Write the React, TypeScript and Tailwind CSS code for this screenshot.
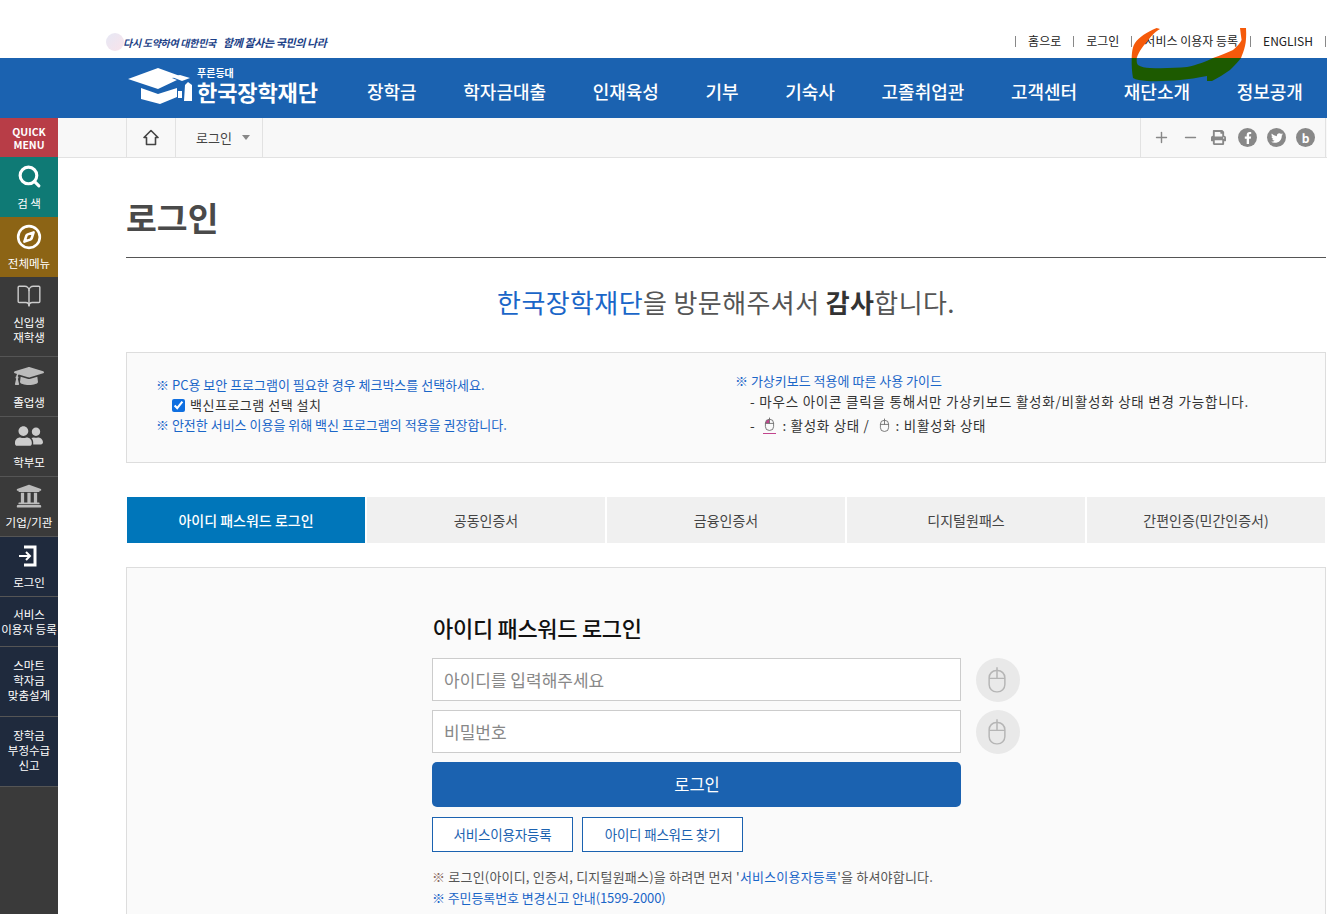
import { BookOpen, Compass, Plus, Minus, Search } from "lucide-react";
import { FaFacebookF, FaGraduationCap, FaPrint, FaTwitter, FaUniversity, FaUserFriends } from "react-icons/fa";

const font = "font-['Noto_Sans_CJK_KR','Noto_Sans',sans-serif]";

const topLinks = ["홈으로", "로그인", "서비스 이용자 등록", "ENGLISH"];

const navItems = ["장학금", "학자금대출", "인재육성", "기부", "기숙사", "고졸취업관", "고객센터", "재단소개", "정보공개"];

const tabs = ["아이디 패스워드 로그인", "공동인증서", "금융인증서", "디지털원패스", "간편인증(민간인증서)"];

const MouseIcon = ({ active = false, className = "" }: { active?: boolean; className?: string }) => (
  <svg viewBox="0 0 16 24" fill="none" className={className}>
    {active && <path d="M1.5 10.5 V9 a6 6 0 0 1 6 -4.5 V10.5z" fill="#c2448d" />}
    <rect x="1" y="4" width="14" height="19" rx="6.5" stroke="currentColor" strokeWidth="1.3" />
    <path d="M1 11h14M8 4v7M8 4V1" stroke="currentColor" strokeWidth="1.3" />
  </svg>
);

const LoginIcon = () => (
  <svg width="22" height="22" viewBox="0 0 22 22" fill="none" stroke="#fff">
    <path d="M6 2h11v18H6" strokeWidth="3" />
    <path d="M1 11h10M8 7l4 4-4 4" strokeWidth="2" />
  </svg>
);

const SideItem = ({ icon, lines, className }: { icon?: React.ReactNode; lines: string[]; className: string }) => (
  <div className={`flex flex-col items-center justify-center border-b border-[#555] text-center text-[11.5px] leading-[15px] text-white ${className}`}>
    {icon && <div className="mb-[6px] flex h-[26px] items-center justify-center">{icon}</div>}
    {lines.map((l) => (
      <div key={l} className="whitespace-nowrap">{l}</div>
    ))}
  </div>
);

const Sidebar = () => (
  <aside className="flex w-[58px] shrink-0 flex-col bg-[#3a3a3a]">
    <div className="flex h-[39px] items-center justify-center bg-[#b83d47] text-center text-[10.5px] font-bold leading-[13px] text-white">
      QUICK
      <br />
      MENU
    </div>
    <SideItem className="h-[60px] border-b-0 bg-[#0f7a75]" lines={["검 색"]} icon={<Search size={25} strokeWidth={3} color="#fff" />} />
    <SideItem className="h-[60px] border-b-0 bg-[#8c6415]" lines={["전체메뉴"]} icon={<Compass size={26} strokeWidth={2.4} color="#fff" />} />
    <SideItem className="h-[80px] pb-[5px]" lines={["신입생", "재학생"]} icon={<BookOpen size={26} strokeWidth={1.3} color="#ccc" />} />
    <SideItem className="h-[60px]" lines={["졸업생"]} icon={<FaGraduationCap size={30} color="#bbb" />} />
    <SideItem className="h-[60px]" lines={["학부모"]} icon={<FaUserFriends size={28} color="#ccc" />} />
    <SideItem className="h-[60px]" lines={["기업/기관"]} icon={<FaUniversity size={26} color="#bbb" />} />
    <SideItem className="h-[60px] bg-[#1f2a3d]" lines={["로그인"]} icon={<LoginIcon />} />
    <SideItem className="h-[50px] bg-[#1f2a3d]" lines={["서비스", "이용자 등록"]} />
    <SideItem className="h-[70px] bg-[#1f2a3d] pb-[3px]" lines={["스마트", "학자금", "맞춤설계"]} />
    <SideItem className="h-[70px] bg-[#1f2a3d] pb-[3px]" lines={["장학금", "부정수급", "신고"]} />
  </aside>
);

const Header = () => (
  <>
    <div className="relative flex h-[58px] items-end justify-between bg-white pl-[106px]">
      <div className="mb-[7px] flex items-center">
        <div className="h-[18px] w-[18px] rounded-full bg-gradient-to-br from-[#e6e8f5] to-[#f9e3ea]" />
        <span className="-ml-px whitespace-nowrap text-[10px] font-bold italic tracking-[-0.3px] text-[#1c3f87]">
          다시 도약하여 대한민국
        </span>
        <span className="ml-[7px] whitespace-nowrap text-[11px] font-bold italic tracking-[-0.4px] text-[#1c3f87]">
          함께 잘사는 국민의 나라
        </span>
      </div>
      <div className="mb-[8px] flex items-center text-[12px] text-[#222]">
        {topLinks.map((t) => (
          <span key={t} className="flex items-center">
            <span className="h-[11px] w-px bg-[#888]" />
            <span className="whitespace-nowrap px-[12px]">{t}</span>
          </span>
        ))}
        <span className="h-[11px] w-px bg-[#888]" />
        <span className="w-px" />
      </div>
      <svg className="absolute left-[1131px] top-[28px]" width="116" height="54" viewBox="0 0 116 54">
        <path d="M0.7 30 C1 22 2 18 4 15 C8 9 16 4 25.6 0 L29 1 C22 5 20 9 17.3 12 C13 17 8 23 5.7 30z" fill="#f55a0a" />
        <path d="M109 0 L115 0 C115.5 8 115 14 114 18 C113 23 111 27 110 30 L82 30 C90 27 96 25 102 22 C106 19 109 15 110.6 12 C110 8 109.5 4 109 0z" fill="#f55a0a" />
        <path d="M0.7 30 L5.7 30 C5.5 34 6 36 7 37 C10 39 14 40 19 40 C32 40.5 46 40 56 39 C66 37 76 33 82 30 L110 30 C107 34 103 38 99 42 C93 46 87 50 81 53 L76 53 L76 48 C66 50 58 51 49 52 C38 53 26 53.5 16 53 C10 52.5 5 52 2 50 C1 44 0.5 38 0.7 30z" fill="#1d5a00" />
      </svg>
    </div>
    <div className="flex h-[60px] items-center bg-[#1b62b0] pl-[127px] text-white">
      <div className="-mt-[6px] flex w-[240px] shrink-0 items-center">
        <svg width="66" height="40" viewBox="0 0 66 40" fill="#fff">
          <path d="M1 14 L31 3 L53 11 L45 13 L50 15 L31 24z" />
          <path d="M45 12 L53 10 L63 13 L55 16z" />
          <path d="M14 23 L31 29 L50 23 V32 L33 39 L14 34z" />
          <rect x="51" y="26" width="4" height="7" />
          <path d="M58 20 L61 17 L65 20 V36 H57z" />
        </svg>
        <div className="ml-[4px] flex flex-col">
          <span className="text-[10px] font-bold leading-[13px]">푸른등대</span>
          <span className="whitespace-nowrap text-[22px] font-bold leading-[25px] tracking-[-0.1px]">한국장학재단</span>
        </div>
      </div>
      <nav className="mt-[6px] flex gap-[46.6px] text-[18px] font-medium">
        {navItems.map((n) => (
          <span key={n} className="whitespace-nowrap">{n}</span>
        ))}
      </nav>
    </div>
  </>
);

const Breadcrumb = () => (
  <div className="flex h-[40px] items-stretch justify-between border-b border-[#e2e2e2] bg-[#f8f8f8] pl-[68px] text-[#555]">
    <div className="flex">
      <div className="flex w-[50px] items-center justify-center border-x border-[#e2e2e2]">
        <svg width="16" height="17" viewBox="0 0 16 17" fill="none" stroke="#444" strokeWidth="1.6">
          <path d="M8 1.5 L15 8.5 H12.5 V15.5 H3.5 V8.5 H1z" strokeLinejoin="round" />
        </svg>
      </div>
      <div className="flex w-[87px] items-center gap-[10px] border-r border-[#e2e2e2] pl-[20px] text-[13px] text-[#444]">
        로그인
        <span className="h-0 w-0 border-x-[4px] border-t-[5px] border-x-transparent border-t-[#888]" />
      </div>
    </div>
    <div className="mr-px flex w-[186px] items-center gap-[10px] border-x border-[#e2e2e2] pl-[12px] text-[#888]">
      <Plus size={17} strokeWidth={2} />
      <Minus size={17} strokeWidth={2} className="ml-[2px]" />
      <FaPrint size={15} className="ml-[2px]" />
      <span className="ml-[2px] flex h-[19px] w-[19px] items-center justify-center rounded-full bg-[#888] text-white"><FaFacebookF size={12} /></span>
      <span className="flex h-[19px] w-[19px] items-center justify-center rounded-full bg-[#888] text-white"><FaTwitter size={12} /></span>
      <span className="flex h-[19px] w-[19px] items-center justify-center rounded-full bg-[#888] text-[12px] font-bold leading-none text-white">b</span>
    </div>
  </div>
);

const Notice = () => (
  <div className="mt-[33px] flex h-[111px] border border-[#ddd] bg-[#fafafa]">
    <div className="w-[608px] pl-[29px] pt-[22px] text-[13px] leading-[20px] text-[#1a66c8]">
      <div>※ PC용 보안 프로그램이 필요한 경우 체크박스를 선택하세요.</div>
      <label className="flex items-center pl-[16px] text-[#333]">
        <input type="checkbox" defaultChecked className="mr-[5px] h-[13px] w-[13px] accent-[#0f6fe0]" />
        <span className="tracking-[0.5px]">백신프로그램 선택 설치</span>
      </label>
      <div>※ 안전한 서비스 이용을 위해 백신 프로그램의 적용을 권장합니다.</div>
    </div>
    <div className="pt-[18px] text-[13px] text-[#333]">
      <div className="leading-[20px] text-[#1a66c8]">※ 가상키보드 적용에 따른 사용 가이드</div>
      <div className="whitespace-nowrap pl-[15px] text-[13.5px] leading-[20px] tracking-[0.78px]">- 마우스 아이콘 클릭을 통해서만 가상키보드 활성화/비활성화 상태 변경 가능합니다.</div>
      <div className="mt-[4px] flex items-center pl-[15px] text-[13.5px] leading-[20px] tracking-[0.7px]">
        -
        <span className="ml-[8px] mr-[6px] border-b border-[#c2448d] px-px pb-[2px]"><MouseIcon active className="h-[14px] w-[11px] text-[#555]" /></span>
        : 활성화 상태 /
        <MouseIcon className="ml-[9px] mr-[6px] h-[14px] w-[11px] text-[#555]" />
        : 비활성화 상태
      </div>
    </div>
  </div>
);

const Tabs = () => (
  <div className="mt-[33px] flex h-[48px] gap-[2px] bg-white p-px">
    {tabs.map((t, i) => (
      <div
        key={t}
        className={`flex flex-1 items-center justify-center text-[14px] ${i === 0 ? "bg-[#0076ba] font-medium text-white" : "bg-[#f0f0f0] text-[#444]"}`}
      >
        {t}
      </div>
    ))}
  </div>
);

const LoginForm = () => (
  <div className="mt-[23px] h-[400px] border border-[#ddd] bg-[#fafafa] pl-[305px] pt-[43px]">
    <h3 className="pl-px text-[22px] font-medium leading-[32px] tracking-[-0.3px] text-[#111]">아이디 패스워드 로그인</h3>
    <div className="mt-[15px] flex flex-col gap-[8px]">
      {["아이디를 입력해주세요", "비밀번호"].map((p) => (
        <div key={p} className="flex items-start gap-[15px]">
          <div className="flex h-[43px] w-[529px] items-center border border-[#ccc] bg-white pl-[11px] text-[17px] text-[#888]">{p}</div>
          <div className="flex h-[44px] w-[44px] items-center justify-center rounded-full bg-[#e9e9e9]">
            <MouseIcon className="-ml-[2px] -mt-[2px] h-[27px] w-[18px] text-[#b5b5b5]" />
          </div>
        </div>
      ))}
    </div>
    <div className="mt-[8px] flex h-[45px] w-[529px] items-center justify-center rounded-[5px] bg-[#1b62b0] pl-px text-[16.5px] text-white">로그인</div>
    <div className="mt-[10px] flex gap-[9px] text-[13.5px] tracking-[-0.2px] text-[#1b62b0]">
      <div className="flex h-[35px] w-[141px] items-center justify-center border border-[#1b62b0] bg-white">서비스이용자등록</div>
      <div className="flex h-[35px] w-[161px] items-center justify-center border border-[#1b62b0] bg-white">아이디 패스워드 찾기</div>
    </div>
    <div className="mt-[13.5px] text-[13px] leading-[21px] text-[#555]">
      <div className="tracking-[0.2px]"><span className="text-[#8a6a60]">※</span> 로그인(아이디, 인증서, 디지털원패스)을 하려면 먼저 '<span className="text-[#1a66c8]">서비스이용자등록</span>'을 하셔야합니다.</div>
      <div className="tracking-[-0.1px] text-[#1a66c8]">※ 주민등록번호 변경신고 안내(1599-2000)</div>
    </div>
  </div>
);

export default function App() {
  return (
    <div className={`h-[914px] overflow-hidden bg-white ${font}`}>
      <Header />
      <div className="flex h-[796px]">
        <Sidebar />
        <main className="min-w-0 flex-1">
          <Breadcrumb />
          <div className="pl-[68px] pr-px">
            <h2 className="mt-[34px] text-[33.5px] font-bold leading-[50px] text-[#4a4a4a]">로그인</h2>
            <div className="mt-[15px] border-t border-[#555]" />
            <p className="mt-[27px] text-center text-[26px] leading-[34px] tracking-[0.4px] text-[#555]">
              <span className="text-[#1a66c8]">한국장학재단</span>을 방문해주셔서 <b className="font-bold text-[#333]">감사</b>합니다.
            </p>
            <Notice />
            <Tabs />
            <LoginForm />
          </div>
        </main>
      </div>
    </div>
  );
}
